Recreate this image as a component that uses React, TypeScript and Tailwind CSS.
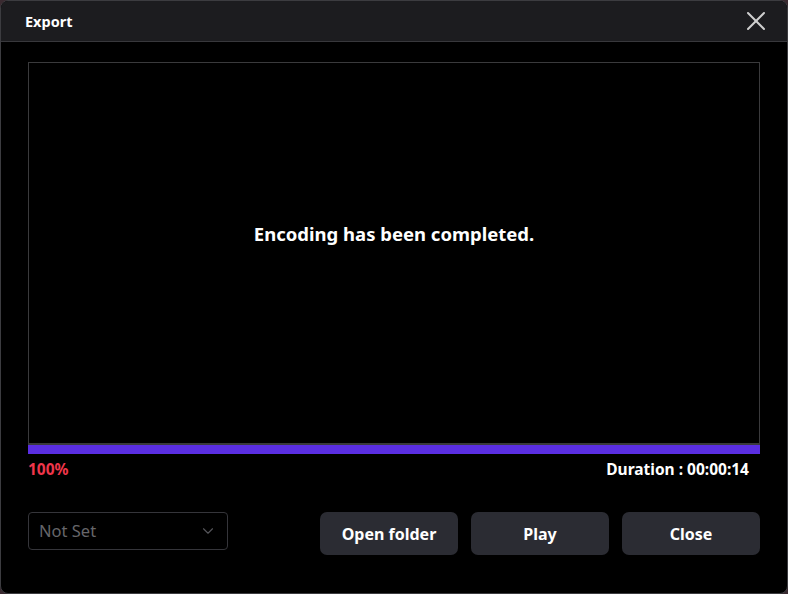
import { ChevronDown, X } from 'lucide-react';

export default function App() {
  return (
    <div className="w-[788px] h-[594px] bg-[#3a2a30] overflow-hidden" style={{ fontFamily: '"Noto Sans", "Noto Sans CJK KR", sans-serif' }}>
      <div className="w-full h-full flex flex-col bg-black border border-[#3c3c40] rounded-[8px] overflow-hidden">
        {/* title bar */}
        <div className="h-[41px] shrink-0 flex items-center justify-between bg-[#1c1c1f] border-b border-[#38383c] pl-[24px] pr-[15px]">
          <span className="text-[14.5px] font-bold text-white mt-[2px]">Export</span>
          <X className="w-[32px] h-[32px] text-[#cfcfcf]" strokeWidth={1.5} />
        </div>

        <div className="flex-1 flex flex-col px-[27px] pt-[20px]">
          {/* preview */}
          <div className="h-[381px] border border-[#3a3a3c] border-b-0 flex items-center justify-center pb-[38px]">
            <span className="text-[18.5px] font-bold text-white">Encoding has been completed.</span>
          </div>
          <div className="h-[2px] bg-[#3a3a3c]" />
          <div className="h-[9px] bg-[#5a2ee2]" />

          <div className="h-[20px] flex items-center justify-between mt-[5px] pr-[11px] leading-[20px]">
            <span className="text-[15.5px] font-bold text-[#f0364b]">100%</span>
            <span className="text-[15.5px] font-bold text-white">Duration : 00:00:14</span>
          </div>

          {/* footer */}
          <div className="flex items-start justify-between mt-[33px]">
            <div className="w-[200px] h-[38px] border border-[#35353a] rounded-[4px] flex items-center justify-between pl-[10px] pr-[10px]">
              <span className="text-[16.5px] text-[#66666a]">Not Set</span>
              <ChevronDown className="w-[18px] h-[18px] text-[#55555a]" strokeWidth={1.5} />
            </div>
            <div className="flex gap-[13px]">
              <button className="w-[138px] h-[43px] rounded-[7px] bg-[#2b2c33] text-white text-[16px] font-bold">Open folder</button>
              <button className="w-[138px] h-[43px] rounded-[7px] bg-[#2b2c33] text-white text-[16px] font-bold">Play</button>
              <button className="w-[138px] h-[43px] rounded-[7px] bg-[#2b2c33] text-white text-[16px] font-bold">Close</button>
            </div>
          </div>
        </div>
      </div>
    </div>
  );
}
